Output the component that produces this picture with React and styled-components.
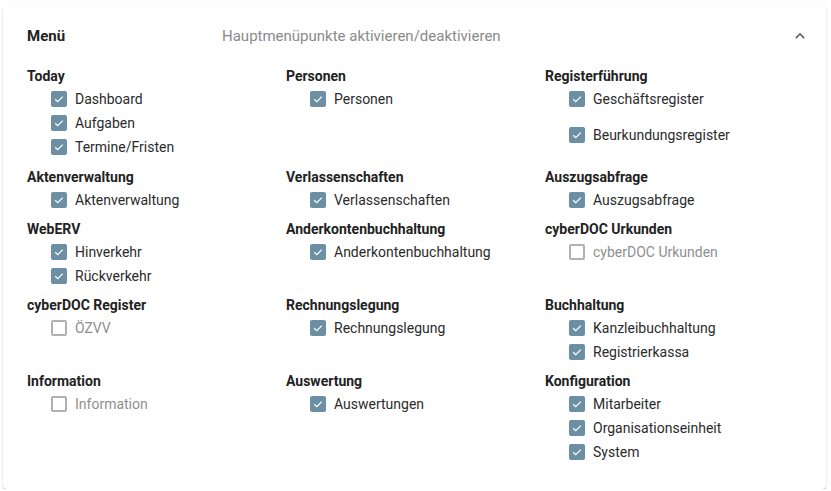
import styled, { createGlobalStyle } from "styled-components";

const GlobalStyle = createGlobalStyle`
  html, body {
    margin: 0;
    padding: 0;
    background: #ffffff;
    font-family: Roboto, "Liberation Sans", sans-serif;
  }
`;

const Page = styled.div`
  padding: 4px 4px 0 3px;
`;

const Card = styled.section`
  width: 823px;
  height: 485px;
  box-sizing: border-box;
  background: #fff;
  border-radius: 4px;
  box-shadow: 0 2px 1px -1px rgba(0, 0, 0, 0.2), 0 1px 1px 0 rgba(0, 0, 0, 0.14),
    0 1px 3px 0 rgba(0, 0, 0, 0.12);
  padding: 22px 20px 0 24px;
`;

const Header = styled.div`
  display: flex;
  align-items: center;
  height: 20px;
`;

const HeaderTitle = styled.div`
  width: 195px;
  font-size: 15px;
  font-weight: 700;
  color: #222;
`;

const HeaderSub = styled.div`
  flex: 1;
  font-size: 15px;
  color: #8a8a8a;
`;

const Chevron = styled.div`
  width: 12px;
  display: flex;
  justify-content: center;
  color: #666;
`;

const Grid = styled.div`
  display: grid;
  grid-template-columns: 259px 259px 1fr;
  row-gap: 7px;
  margin-top: 20px;
`;

const Section = styled.div`
  display: flex;
  flex-direction: column;
  margin-bottom: ${(p) => (p.$first ? "1px" : "0")};
`;

const SectionTitle = styled.div`
  height: 20px;
  line-height: 20px;
  margin-bottom: 1px;
  font-size: 14px;
  font-weight: 700;
  color: #222;
`;

const Item = styled.label`
  display: flex;
  align-items: center;
  height: 24px;
  padding-left: 24px;
  margin-top: ${(p) => (p.$gap ? "12px" : "0")};
  font-size: 14px;
  color: ${(p) => (p.$checked ? "#2b2b2b" : "#8f8f8f")};
`;

const Box = styled.span`
  width: 16px;
  height: 16px;
  box-sizing: border-box;
  border-radius: 2px;
  margin-right: 8px;
  display: flex;
  align-items: center;
  justify-content: center;
  background: ${(p) => (p.$checked ? "#6c8fa3" : "transparent")};
  border: ${(p) => (p.$checked ? "none" : "2px solid #b0b0b0")};
`;

const Check = () => (
  <svg width="12" height="12" viewBox="0 0 12 12">
    <path d="M2.2 6.2 L4.8 8.7 L9.8 3.6" fill="none" stroke="#fff" strokeWidth="1.2" />
  </svg>
);

const sections = [
  { title: "Today", items: [["Dashboard", true], ["Aufgaben", true], ["Termine/Fristen", true]] },
  { title: "Personen", items: [["Personen", true]] },
  { title: "Registerführung", items: [["Geschäftsregister", true], ["Beurkundungsregister", true, true]] },
  { title: "Aktenverwaltung", items: [["Aktenverwaltung", true]] },
  { title: "Verlassenschaften", items: [["Verlassenschaften", true]] },
  { title: "Auszugsabfrage", items: [["Auszugsabfrage", true]] },
  { title: "WebERV", items: [["Hinverkehr", true], ["Rückverkehr", true]] },
  { title: "Anderkontenbuchhaltung", items: [["Anderkontenbuchhaltung", true]] },
  { title: "cyberDOC Urkunden", items: [["cyberDOC Urkunden", false]] },
  { title: "cyberDOC Register", items: [["ÖZVV", false]] },
  { title: "Rechnungslegung", items: [["Rechnungslegung", true]] },
  { title: "Buchhaltung", items: [["Kanzleibuchhaltung", true], ["Registrierkassa", true]] },
  { title: "Information", items: [["Information", false]] },
  { title: "Auswertung", items: [["Auswertungen", true]] },
  { title: "Konfiguration", items: [["Mitarbeiter", true], ["Organisationseinheit", true], ["System", true]] },
];

export default function App() {
  return (
    <Page>
      <GlobalStyle />
      <Card>
        <Header>
          <HeaderTitle>Menü</HeaderTitle>
          <HeaderSub>Hauptmenüpunkte aktivieren/deaktivieren</HeaderSub>
          <Chevron>
            <svg width="12" height="8" viewBox="0 0 12 8">
              <path d="M1.8 6.2 L6 2 L10.2 6.2" fill="none" stroke="currentColor" strokeWidth="1.7" />
            </svg>
          </Chevron>
        </Header>
        <Grid>
          {sections.map((s, i) => (
            <Section key={s.title} $first={i < 3}>
              <SectionTitle>{s.title}</SectionTitle>
              {s.items.map(([label, checked, gap]) => (
                <Item key={label} $checked={checked} $gap={gap}>
                  <Box $checked={checked}>{checked && <Check />}</Box>
                  {label}
                </Item>
              ))}
            </Section>
          ))}
        </Grid>
      </Card>
    </Page>
  );
}
